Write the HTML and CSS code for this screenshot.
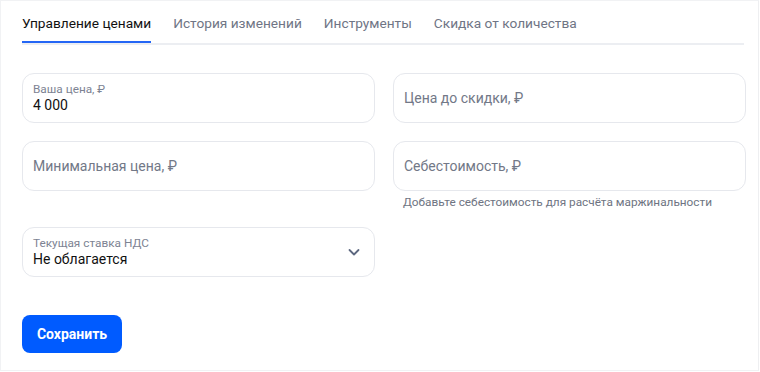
FILE: index.html
```html
<!DOCTYPE html>
<html lang="ru">
<head>
<meta charset="utf-8">
<link rel="stylesheet" href="styles.css">
</head>
<body>
<div class="card">
  <nav class="tabs">
    <div class="tab active">Управление ценами</div>
    <div class="tab">История изменений</div>
    <div class="tab">Инструменты</div>
    <div class="tab">Скидка от количества</div>
  </nav>
  <div class="grid">
    <div class="cell">
      <div class="field filled">
        <div class="label">Ваша цена, ₽</div>
        <div class="value">4 000</div>
      </div>
    </div>
    <div class="cell">
      <div class="field"><div class="placeholder">Цена до скидки, ₽</div></div>
    </div>
    <div class="cell">
      <div class="field"><div class="placeholder">Минимальная цена, ₽</div></div>
    </div>
    <div class="cell">
      <div class="field"><div class="placeholder">Себестоимость, ₽</div></div>
      <div class="hint">Добавьте себестоимость для расчёта маржинальности</div>
    </div>
    <div class="cell">
      <div class="field filled select">
        <div class="sel-text">
          <div class="label">Текущая ставка НДС</div>
          <div class="value">Не облагается</div>
        </div>
        <svg class="chev" width="14" height="14" viewBox="0 0 14 14"><path d="M2.5 5l4.5 4.5L11.5 5" fill="none" stroke="#5d6880" stroke-width="1.8" stroke-linecap="round" stroke-linejoin="round"/></svg>
      </div>
    </div>
  </div>
  <button class="save">Сохранить</button>
</div>
</body>
</html>
```

FILE: styles.css
```css
* { box-sizing: border-box; }
html, body { margin: 0; padding: 0; background: #fff; }
body {
  font-family: Roboto, "Noto Sans", sans-serif;
  width: 760px;
  height: 372px;
}
.card {
  width: 759px;
  height: 371px;
  border: 1px solid #f1f2f4;
  border-right-color: #eeeff1;
  padding: 0 14px 0 21px;
}
.tabs {
  display: flex;
  gap: 22px;
  border-bottom: 2px solid #eceef2;
  height: 44px;
  padding-top: 13px;
}
.tab {
  font-size: 13.7px;
  line-height: 18px;
  color: #6f7585;
  height: 29px;
}
.tab.active {
  color: #111;
  border-bottom: 2px solid #2466f5;
}
.grid {
  display: grid;
  grid-template-columns: 353px 353px;
  column-gap: 18px;
  margin-top: 28px;
  grid-template-rows: 68px 86px 50px;
}
.cell { display: flex; flex-direction: column; }
.field {
  height: 50px;
  border: 1px solid #e6e8ed;
  border-radius: 12px;
  padding: 0 10px;
  display: flex;
  flex-direction: column;
  justify-content: center;
}
.placeholder {
  font-size: 14px;
  color: #727887;
}
.label {
  font-size: 11.8px;
  line-height: 14px;
  color: #7d8393;
}
.value {
  font-size: 14px;
  line-height: 18px;
  color: #111;
}
.select {
  flex-direction: row;
  align-items: center;
  justify-content: space-between;
  padding-right: 13px;
}
.chev { display: block; }
.hint {
  font-size: 11.8px;
  color: #6e7482;
  margin-top: 4px;
  padding-left: 10px;
}
.save {
  margin-top: 38px;
  width: 100px;
  height: 38px;
  border: none;
  border-radius: 8px;
  background: #005bff;
  color: #fff;
  font-family: Roboto, sans-serif;
  font-weight: 700;
  font-size: 14px;
  padding: 0;
}
```
